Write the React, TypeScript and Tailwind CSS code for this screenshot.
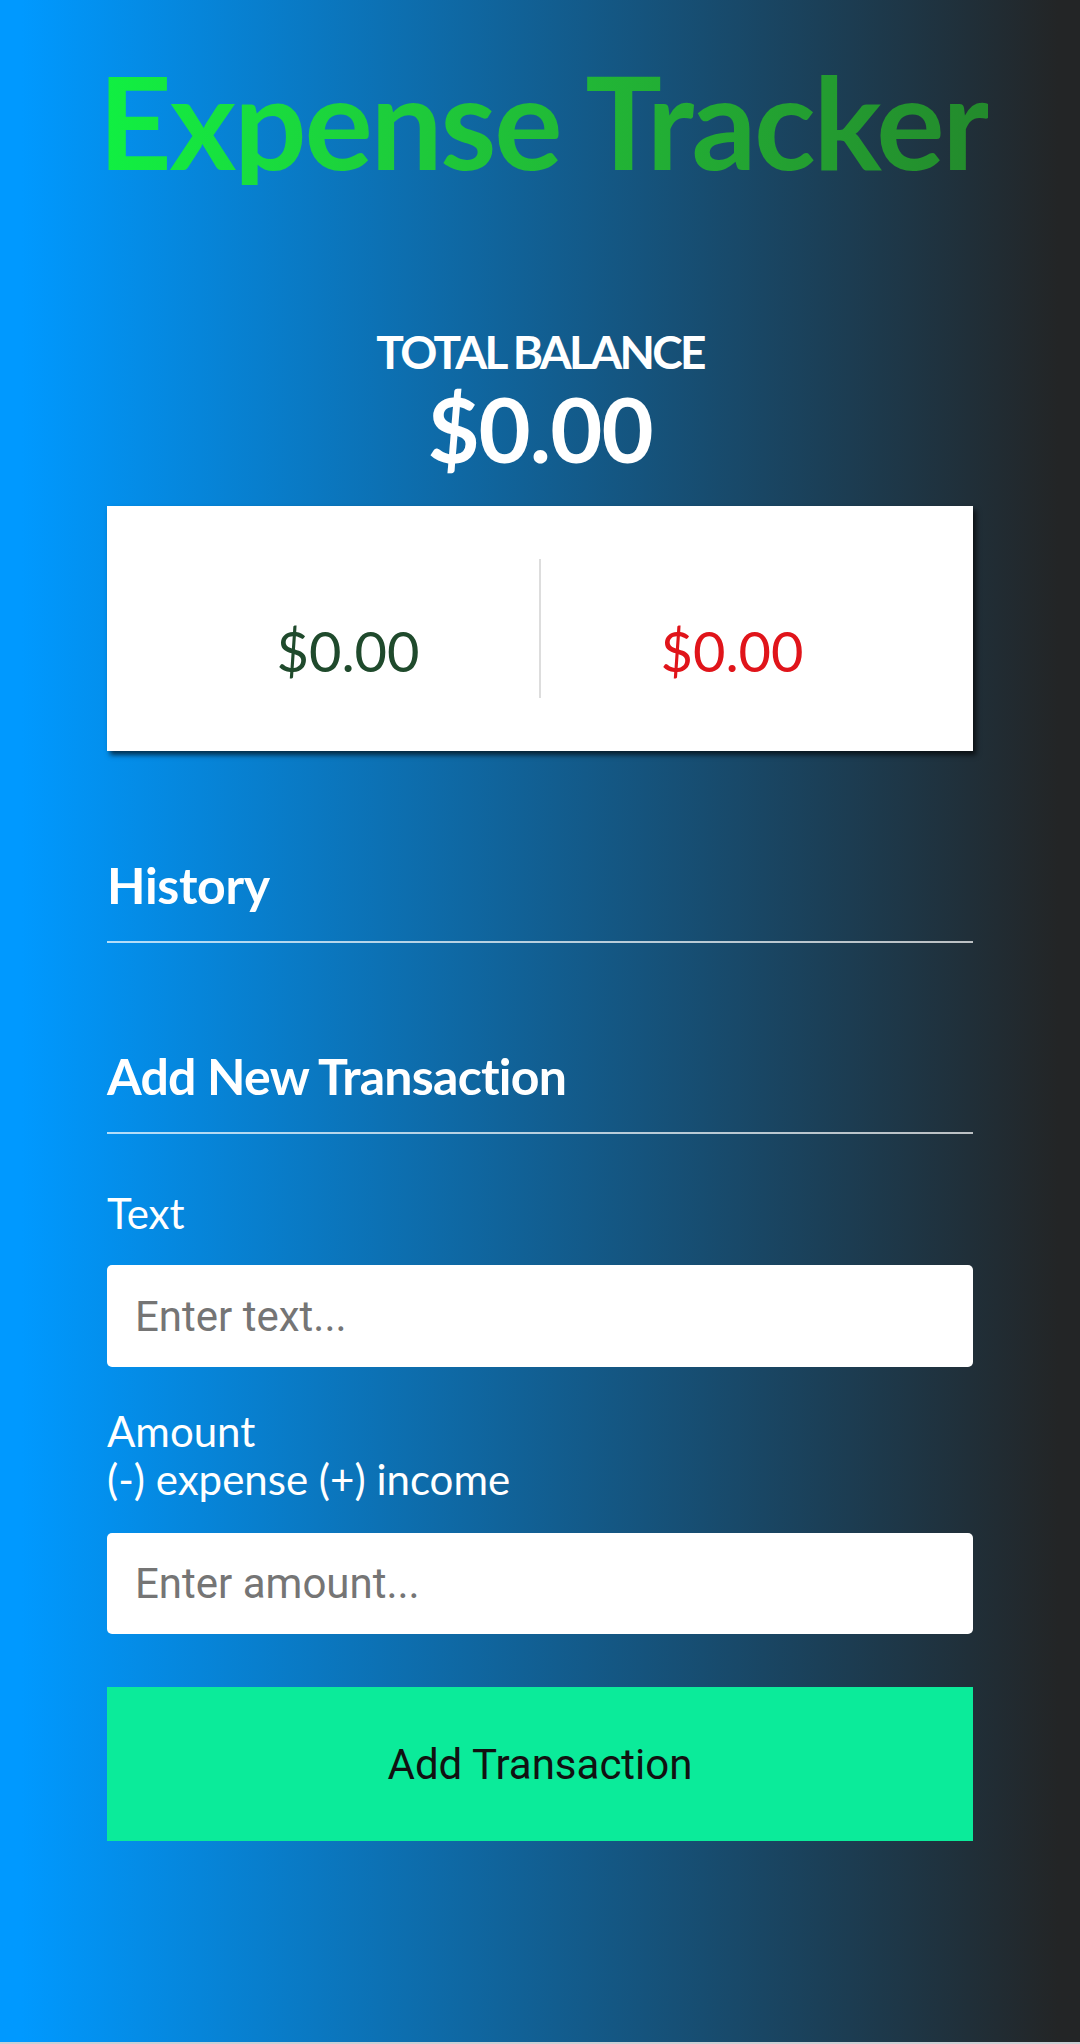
const App = () => {
  return (
    <div
      className="min-h-[2044px] bg-[linear-gradient(to_right,#0099ff_2%,#232526_98%)] border-b-2 border-[#c9cfd4] text-white"
      style={{ fontFamily: "Lato, 'Noto Sans', sans-serif" }}
    >
      <div className="mx-auto w-[866px] flex flex-col">
        <h1 className="mt-[57px] self-center pl-[6px] text-center text-[128px] leading-[128px] font-bold tracking-[-2.3px] bg-gradient-to-r from-[#0ff142] to-[#238a2c] bg-clip-text text-transparent whitespace-nowrap">
          Expense Tracker
        </h1>

        <h4 className="mt-[144px] text-center text-[46px] leading-[46px] font-bold tracking-[-2.7px]">
          TOTAL BALANCE
        </h4>
        <h2 className="mt-[8px] text-center text-[90px] leading-[90px] font-bold tracking-[-1px]">
          $0.00
        </h2>

        <div className="mt-[33px] h-[245px] bg-white px-[50px] flex items-center shadow-[3px_4px_5px_rgba(0,0,0,0.65)]">
          <div className="flex-1 h-[139px] border-r-2 border-[#dddddd] flex flex-col items-center justify-end pb-[19px]">
            <p className="text-[56px] leading-[56px] text-[#1f4a2c]">$0.00</p>
          </div>
          <div className="flex-1 h-[139px] flex flex-col items-center justify-end pb-[19px]">
            <p className="text-[56px] leading-[56px] text-[#e0141a]">$0.00</p>
          </div>
        </div>

        <h3 className="mt-[109px] text-[50px] leading-[50px] font-bold tracking-[-0.3px]">
          History
        </h3>
        <div className="mt-[31px] h-[2px] bg-white/70" />

        <h3 className="mt-[108px] text-[50px] leading-[50px] font-bold tracking-[-0.75px]">
          Add New Transaction
        </h3>
        <div className="mt-[31px] h-[2px] bg-white/70" />

        <form className="flex flex-col">
          <label className="mt-[55px] text-[42px] leading-[48px]">Text</label>
          <input
            type="text"
            placeholder="Enter text..."
            className="mt-[28px] h-[102px] rounded-[5px] bg-white px-[28px] text-[42px] text-black placeholder:text-[#757575] outline-none"
            style={{ fontFamily: "Roboto, sans-serif" }}
          />

          <label className="mt-[40px] text-[42px] leading-[48px]">
            Amount
            <br />
            (-) expense (+) income
          </label>
          <input
            type="number"
            placeholder="Enter amount..."
            className="mt-[30px] h-[101px] rounded-[5px] bg-white px-[28px] text-[42px] text-black placeholder:text-[#757575] outline-none"
            style={{ fontFamily: "Roboto, sans-serif" }}
          />

          <button
            type="button"
            className="mt-[53px] h-[154px] bg-[#0beb9a] text-[42px] text-[#111111]"
            style={{ fontFamily: "Roboto, sans-serif" }}
          >
            Add Transaction
          </button>
        </form>
      </div>
    </div>
  );
};

export default App;
